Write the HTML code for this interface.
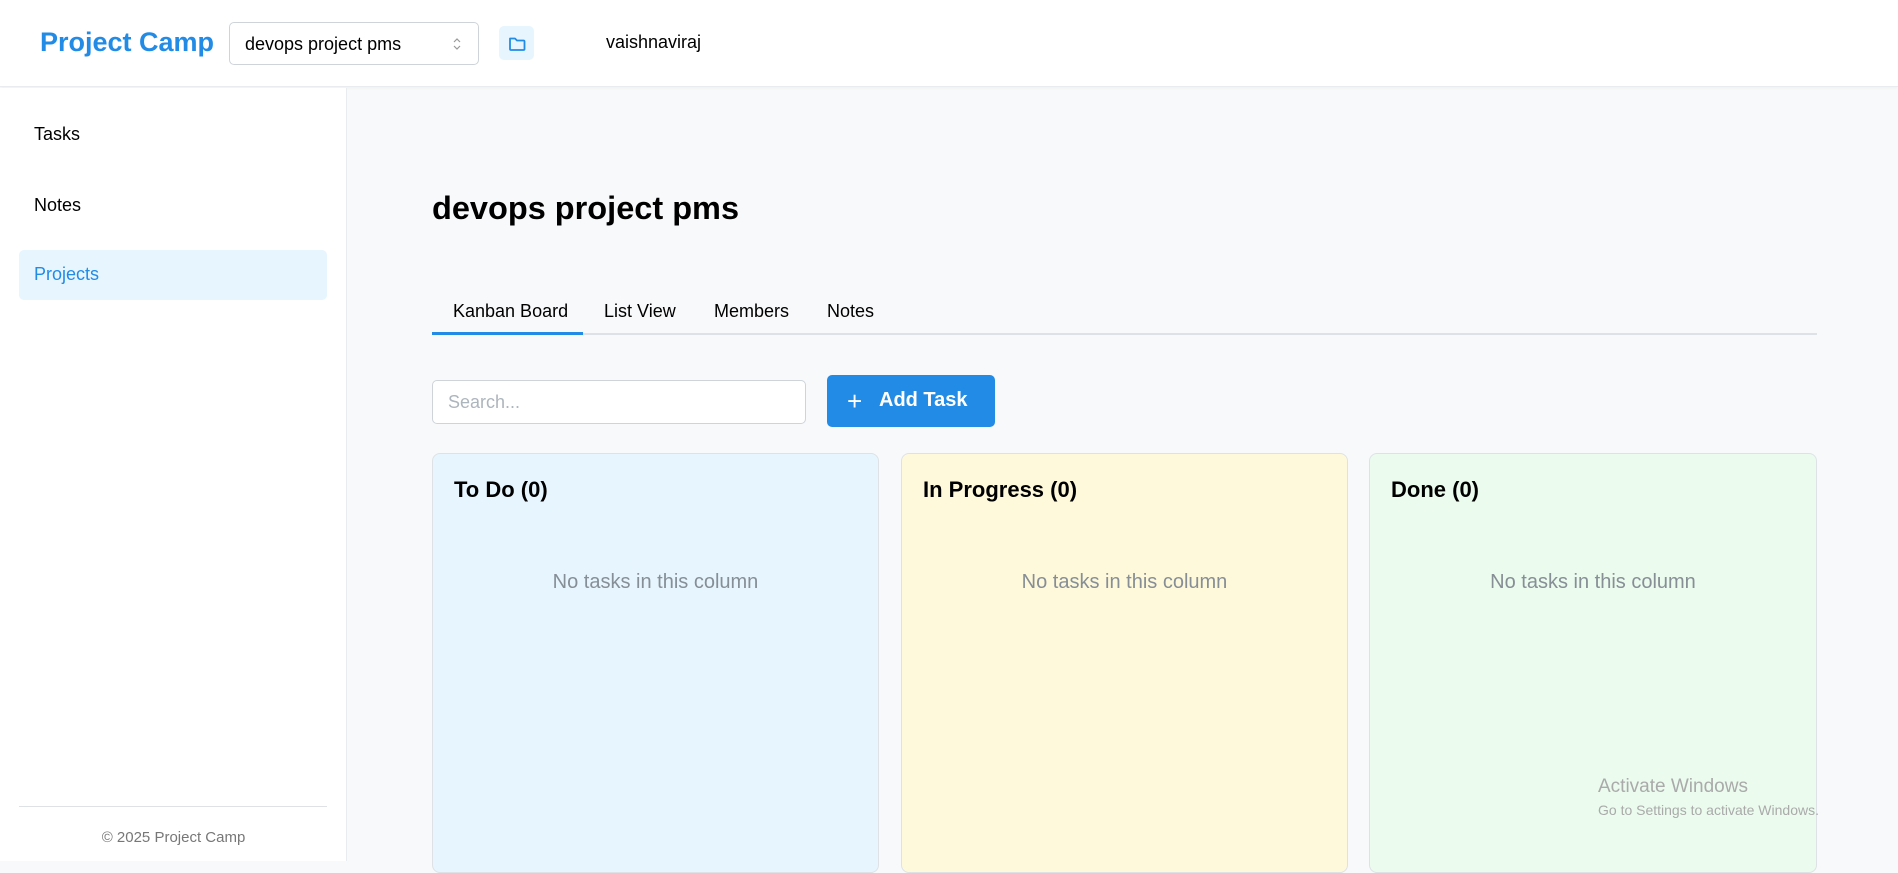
<!DOCTYPE html>
<html><head><meta charset="utf-8"><style>
*{box-sizing:border-box;margin:0;padding:0}
body{width:1898px;height:861px;overflow:hidden;font-family:"Liberation Sans",Arial,sans-serif;background:#f8f9fa;position:relative;color:#000}
.hdr{position:absolute;left:0;top:0;width:1898px;height:87px;background:#fff;border-bottom:1px solid #e9ecef;box-shadow:0 1px 3px rgba(0,0,0,0.04)}
.logo{position:absolute;left:40px;top:27px;font-size:27px;font-weight:bold;color:#228be6}
.sel{position:absolute;left:229px;top:22px;width:250px;height:43px;border:1px solid #ced4da;border-radius:5px;background:#fff;font-size:18px;padding:11px 0 0 15px}
.sel svg{position:absolute;right:16px;top:13px}
.fb{position:absolute;left:499px;top:26px;width:35px;height:34px;background:#e7f5ff;border-radius:5px}
.user{position:absolute;left:606px;top:32px;font-size:18px}
.side{position:absolute;left:0;top:88px;width:347px;height:773px;background:#fff;border-right:1px solid #e9ecef}
.si{position:absolute;left:19px;width:308px;height:50px;font-size:18px;padding:14px 0 0 15px;border-radius:5px}
.si.act{background:#e7f5ff;color:#228be6}
.fl{position:absolute;left:19px;top:718px;width:308px;border-top:1px solid #dee2e6}
.ft{position:absolute;left:0;width:347px;top:741px;text-align:center;font-size:15px;color:#777}
h1{position:absolute;left:432px;top:190px;font-size:32.5px;font-weight:bold}
.tabs{position:absolute;left:432px;top:333px;width:1385px;border-top:2px solid #dee2e6}
.tab{position:absolute;top:301px;font-size:18px}
.ul{position:absolute;left:432px;top:332px;width:151px;height:3px;background:#228be6}
.search{position:absolute;left:432px;top:380px;width:374px;height:44px;border:1px solid #ced4da;border-radius:5px;background:#fff;font-size:18px;color:#adb5bd;padding:11px 0 0 15px}
.btn{position:absolute;left:827px;top:375px;width:168px;height:52px;background:#228be6;border-radius:5px;color:#fff;font-size:20px;font-weight:bold;padding:14px 0 0 52px}
.btn .pl{position:absolute;left:20px;top:11px;font-weight:normal;font-size:26px}
.col{position:absolute;top:453px;height:420px;border:1px solid #dee2e6;border-radius:8px}
.col h3{position:absolute;left:21px;top:23px;font-size:22px}
.col p{position:absolute;left:0;right:0;top:117px;text-align:center;font-size:20px;color:#868e96}
.wm{position:absolute;left:1598px;color:#aaa}
</style></head><body>
<div class="hdr">
<div class="logo">Project Camp</div>
<div class="sel">devops project pms<svg width="10" height="16" viewBox="0 0 10 16"><path d="M2 6 L5 3 L8 6 M2 10 L5 13 L8 10" fill="none" stroke="#999" stroke-width="1.2"/></svg></div>
<div class="fb"><svg width="35" height="34" viewBox="0 0 35 34"><path d="M11 12.5 h5 l2 2 h6.5 a1 1 0 0 1 1 1 v7.5 a1 1 0 0 1 -1 1 h-12.5 a1 1 0 0 1 -1 -1 z" fill="none" stroke="#228be6" stroke-width="1.8" stroke-linejoin="round"/></svg></div>
<div class="user">vaishnaviraj</div>
</div>
<div class="side">
<div class="si" style="top:22px">Tasks</div>
<div class="si" style="top:93px">Notes</div>
<div class="si act" style="top:162px">Projects</div>
<div class="fl"></div>
<div class="ft">© 2025 Project Camp</div>
</div>
<h1>devops project pms</h1>
<div class="tab" style="left:453px">Kanban Board</div>
<div class="tab" style="left:604px">List View</div>
<div class="tab" style="left:714px">Members</div>
<div class="tab" style="left:827px">Notes</div>
<div class="tabs"></div><div class="ul"></div>
<div class="search">Search...</div>
<div class="btn"><span class="pl">+</span>Add Task</div>
<div class="col" style="left:432px;width:447px;background:#e7f5fe"><h3>To Do (0)</h3><p>No tasks in this column</p></div>
<div class="col" style="left:901px;width:447px;background:#fff9db"><h3>In Progress (0)</h3><p>No tasks in this column</p></div>
<div class="col" style="left:1369px;width:448px;background:#ebfbee"><h3>Done (0)</h3><p>No tasks in this column</p></div>
<div class="wm" style="top:776px;font-size:19px">Activate Windows</div>
<div class="wm" style="top:802px;font-size:14px">Go to Settings to activate Windows.</div>
</body></html>
